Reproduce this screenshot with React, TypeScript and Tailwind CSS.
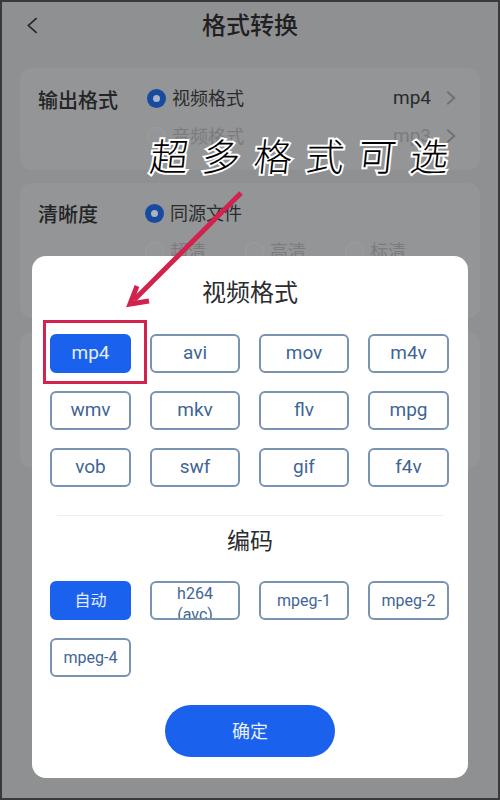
const video = [
  ['mp4', 'avi', 'mov', 'm4v'],
  ['wmv', 'mkv', 'flv', 'mpg'],
  ['vob', 'swf', 'gif', 'f4v'],
];

function Chip({ label, active, wide, small }: { label: string; active?: boolean; wide?: boolean; small?: boolean }) {
  return (
    <div
      className={
        'h-[39px] shrink-0 rounded-[6px] flex items-center justify-center border-2 ' +
        (small ? 'text-[16px] ' : 'text-[19px] ') +
        (wide ? 'w-[90px] ' : 'w-[81px] ') +
        (active ? 'bg-[#1a62ee] border-[#1a62ee] text-[#e6eefc]' : 'bg-white border-[#7a93b2] text-[#3f6595]')
      }
    >
      {label}
    </div>
  );
}

function Radio({ on }: { on?: boolean }) {
  return on ? (
    <span className="w-[19px] h-[19px] shrink-0 rounded-full bg-[#184a9f] flex items-center justify-center">
      <span className="w-[7px] h-[7px] rounded-full bg-[#a9b4c6]" />
    </span>
  ) : (
    <span className="w-[19px] h-[19px] shrink-0 rounded-full border border-[#9d9e9f] bg-[#959697]" />
  );
}

function Chevron({ className }: { className: string }) {
  return (
    <svg viewBox="0 0 12 18" className={className} fill="none" stroke="currentColor" strokeWidth="2.2">
      <path d="M1.5 1.5 L10 9 L1.5 16.5" />
    </svg>
  );
}

export default function App() {
  return (
    <div className="relative w-[500px] h-[800px] overflow-hidden bg-[#8f9092] border-2 border-[#3a3a3c] font-['Roboto','Noto_Sans_CJK_SC',sans-serif] box-border">
      {/* Dimmed page */}
      <div className="flex flex-col px-[18px]">
        <div className="relative h-[46px] mt-[1px] flex items-center justify-center text-[24px] font-medium text-[#1f2022]">
          <svg viewBox="0 0 12 18" className="absolute left-[7px] top-[14px] w-[11px] h-[17px] text-[#232426]" fill="none" stroke="currentColor" strokeWidth="1.8">
            <path d="M10.5 1 L1.5 9 L10.5 17" />
          </svg>
          格式转换
        </div>

        <div className="mt-[19px] h-[102px] rounded-[12px] bg-[#949597] pl-[18px] pr-[24px] pt-[20px] flex">
          <div className="w-[109px] text-[20px] font-medium leading-[28px] mt-[-1px] text-[#232426]">输出格式</div>
          <div className="flex-1 flex flex-col gap-[18px]">
            <div className="flex items-center gap-[6px] h-[20px] text-[18px] text-[#2a2b2d]">
              <Radio on />
              <span className="flex-1">视频格式</span>
              <span className="text-[19px]">mp4</span>
              <Chevron className="ml-[9px] w-[10px] h-[16px] text-[#6f7072]" />
            </div>
            <div className="flex items-center gap-[6px] h-[20px] text-[18px] text-[#7b7c7e]">
              <Radio />
              <span className="flex-1">音频格式</span>
              <span className="text-[19px]">mp3</span>
              <Chevron className="ml-[9px] w-[10px] h-[16px] text-[#6f7072]" />
            </div>
          </div>
        </div>

        <div className="mt-[13px] h-[135px] rounded-[12px] bg-[#949597] pl-[18px] pt-[20px] flex">
          <div className="w-[107px] text-[20px] font-medium leading-[28px] mt-[-2px] text-[#232426]">清晰度</div>
          <div className="flex-1 flex flex-col gap-[18px]">
            <div className="flex items-center gap-[6px] h-[20px] text-[18px] text-[#2a2b2d]">
              <Radio on />
              <span>同源文件</span>
            </div>
            <div className="flex text-[18px] text-[#7b7c7e]">
              <div className="w-[100px] h-[20px] flex items-center gap-[6px]"><Radio />超清</div>
              <div className="w-[100px] h-[20px] flex items-center gap-[6px]"><Radio />高清</div>
              <div className="w-[100px] h-[20px] flex items-center gap-[6px]"><Radio />标清</div>
            </div>
          </div>
        </div>

        <div className="mt-[14px] h-[136px] rounded-[12px] bg-[#949597]" />
      </div>

      {/* Dialog */}
      <div className="absolute left-[30px] top-[254px] w-[436px] h-[522px] rounded-[14px] bg-white px-[18px] flex flex-col">
        <div className="h-[78px] pt-[21px] text-center text-[24px] leading-[32px] text-[#2b2c2e]">视频格式</div>
        <div className="flex flex-col gap-[18px]">
          {video.map((row) => (
            <div key={row[0]} className="flex gap-[19px]">
              <Chip label={row[0]} active={row[0] === 'mp4'} />
              <Chip label={row[1]} wide />
              <Chip label={row[2]} wide />
              <Chip label={row[3]} />
            </div>
          ))}
        </div>
        <div className="mt-[28px] mx-[7px] h-px bg-[#eeeeee]" />
        <div className="h-[65px] pt-[10px] text-center text-[23px] leading-[32px] text-[#2b2c2e]">编码</div>
        <div className="flex flex-col gap-[18px]">
          <div className="flex gap-[19px]">
            <Chip label="自动" active small />
            <div className="w-[90px] h-[39px] shrink-0 rounded-[6px] border-2 border-[#7a93b2] bg-white text-[#3f6595] text-[16px] leading-[21px] text-center overflow-hidden">
              h264<br />(avc)
            </div>
            <Chip label="mpeg-1" wide small />
            <Chip label="mpeg-2" small />
          </div>
          <div className="flex">
            <Chip label="mpeg-4" small />
          </div>
        </div>
        <div className="mt-[28px] mx-auto w-[170px] h-[52px] rounded-full bg-[#1a62ee] flex items-center justify-center text-[18px] text-[#e9f0fd]">
          确定
        </div>
      </div>

      {/* Annotation overlays */}
      <div className="absolute left-[148px] top-[132px] w-[310px] -skew-x-6 text-[38px] leading-[48px] font-light tracking-[14px] whitespace-nowrap text-black [-webkit-text-stroke:4px_white] [paint-order:stroke_fill]">
        超多格式可选
      </div>
      <div className="absolute left-[41px] top-[318px] w-[104px] h-[64px] border-[3px] border-[#d2234f]" />
      <svg className="absolute left-0 top-0 w-[496px] h-[796px] pointer-events-none" viewBox="2 2 496 796" fill="none">
        <path d="M241 193 L134 300" stroke="#d2234f" strokeWidth="5" />
        <path d="M137 286 L130 304 L149 301" stroke="#d2234f" strokeWidth="5" />
      </svg>
    </div>
  );
}
